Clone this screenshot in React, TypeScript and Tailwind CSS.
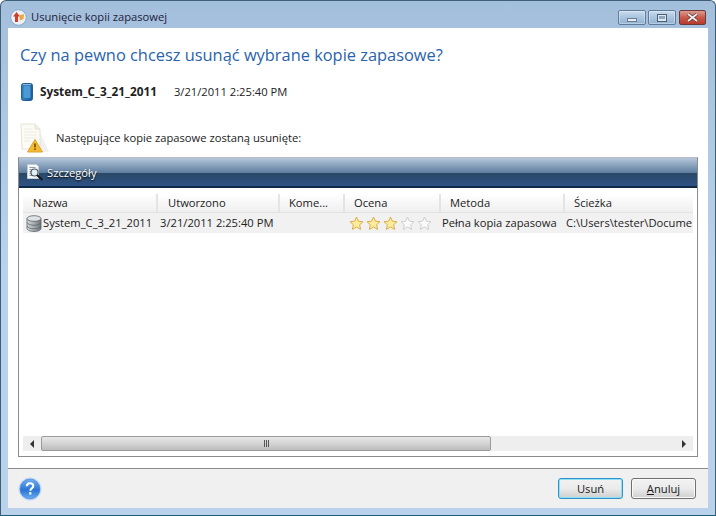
const columns = [
  { title: 'Nazwa', width: 'w-[135px]', pad: 'pl-[10px]' },
  { title: 'Utworzono', width: 'w-[122px]', pad: 'pl-[10px]' },
  { title: 'Kome...', width: 'w-[65px]', pad: 'pl-[9px]' },
  { title: 'Ocena', width: 'w-[96px]', pad: 'pl-[9px]' },
  { title: 'Metoda', width: 'w-[124px]', pad: 'pl-[9px]' },
  { title: 'Ścieżka', width: 'w-[128px]', pad: 'pl-[9px]' },
];

function AppIcon() {
  return (
    <svg width="17" height="17" viewBox="0 0 17 17">
      <circle cx="8.500" cy="8.500" r="7.800" fill="#eef2f6" stroke="#86a6c8" strokeWidth="1" />
      <path d="M6.500 3 10 7.500H8V13H5V7.500H3z" fill="#cf3f30" />
      <path d="M9 6.500 14 5 13.500 10 10 11.500z" fill="#efa63c" />
    </svg>
  );
}

function DeviceIcon() {
  return (
    <svg width="12" height="18" viewBox="0 0 12 18">
      <defs>
        <linearGradient id="dev" x1="0" x2="1" y1="0" y2="0">
          <stop offset="0" stopColor="#2f7fc0" />
          <stop offset="1" stopColor="#1b5f9c" />
        </linearGradient>
      </defs>
      <rect x="0.500" y="0.500" width="11" height="17" rx="2" fill="url(#dev)" stroke="#25608f" />
      <rect x="2.500" y="3" width="7" height="12" rx="1" fill="#4c9ad2" />
      <rect x="2" y="1.200" width="8" height="1" fill="#9ccbe9" />
    </svg>
  );
}

function WarningDocIcon() {
  return (
    <svg width="31" height="34" viewBox="0 0 31 34">
      <path d="M14 31 21 11 30 31z" fill="#e6e6e6" opacity="0.6" />
      <path d="M2 3h14l5 5v20H3z" fill="#fcfbf6" stroke="#e6e3d6" />
      <path d="M16 3v5h5" fill="#f0eee2" stroke="#e6e3d6" />
      <path d="M5 8h8M5 11h13M5 14h13M5 17h13M5 20h6" stroke="#eeece0" />
      <path d="M16 18.500 23.500 31H8.500z" fill="#f7b92c" stroke="#d9a435" />
      <path d="M16 22.500v4M16 27.500v1.500" stroke="#5a3c08" strokeWidth="1.400" />
    </svg>
  );
}

function DetailsIcon() {
  return (
    <svg width="18" height="18" viewBox="0 0 18 18">
      <path d="M1.500 0.500h9l2 2v12h-11z" fill="#f6f8fa" stroke="#c3ccd5" />
      <path d="M3.500 3.500h6M3.500 5.500h2M3.500 7.500h2M3.500 9.500h2M3.500 11.500h4" stroke="#8d99a5" />
      <circle cx="8.500" cy="8.500" r="3.500" fill="#e3eef5" stroke="#4d5a64" strokeWidth="1.200" />
      <path d="M11 11 16.500 16" stroke="#141c24" strokeWidth="2.200" />
    </svg>
  );
}

function DiskIcon() {
  return (
    <svg width="16" height="17" viewBox="0 0 16 17">
      <defs>
        <linearGradient id="disk" x1="0" x2="1" y1="0" y2="0">
          <stop offset="0" stopColor="#d6dadd" />
          <stop offset="0.500" stopColor="#a6acb1" />
          <stop offset="1" stopColor="#6d7378" />
        </linearGradient>
      </defs>
      <path d="M1 3.500v10C1 15.200 4.400 16.500 8 16.500s7-1.300 7-3v-10z" fill="url(#disk)" stroke="#5d6468" strokeWidth="0.800" />
      <ellipse cx="8" cy="3.500" rx="7" ry="2.800" fill="#dfe3e6" stroke="#5d6468" strokeWidth="0.800" />
      <path d="M1 7.500c1 1.800 3.800 2.800 7 2.800s6-1 7-2.800M1 11c1 1.800 3.800 2.800 7 2.800s6-1 7-2.800" fill="none" stroke="#5d6468" strokeWidth="0.800" />
    </svg>
  );
}

function Star({ on }: { on: boolean }) {
  return (
    <svg width="15" height="15" viewBox="0 0 15 15" className="shrink-0">
      <path
        d="M7.500 1 9.400 5.200 14 5.700 10.600 8.800 11.600 13.400 7.500 11 3.400 13.400 4.400 8.800 1 5.700 5.600 5.200z"
        fill={on ? '#fdeb9c' : '#fbfbfb'}
        stroke={on ? '#d9ae4a' : '#cdcdcd'}
        strokeWidth="1"
        strokeLinejoin="round"
      />
    </svg>
  );
}

function HelpIcon() {
  return (
    <svg width="24" height="24" viewBox="0 0 24 24">
      <defs>
        <linearGradient id="help" x1="0" x2="0" y1="0" y2="1">
          <stop offset="0" stopColor="#6fb0f0" />
          <stop offset="0.550" stopColor="#2c74d4" />
          <stop offset="1" stopColor="#68aef0" />
        </linearGradient>
      </defs>
      <circle cx="12" cy="12" r="11.500" fill="#c5dcf7" />
      <circle cx="12" cy="12" r="10" fill="url(#help)" stroke="#3b7fd0" strokeWidth="0.600" />
      <path d="M8.800 9.300c0-2 1.500-3 3.300-3s3.200 1 3.200 2.700c0 2.400-3 2.400-3 4.700" fill="none" stroke="#fff" strokeWidth="2" />
      <rect x="11.200" y="15.200" width="2.200" height="2.300" fill="#fff" />
    </svg>
  );
}

function WindowButton({ kind }: { kind: 'min' | 'max' | 'close' }) {
  if (kind === 'close') {
    return (
      <div className="w-[27px] h-[15px] ml-[1px] rounded-[2px] border border-[#6b3a3a] bg-gradient-to-b from-[#dd9a8e] via-[#c9594a] to-[#b8392c] flex items-center justify-center">
        <svg width="13" height="9" viewBox="0 0 13 9">
          <path d="M2 1l9 7M11 1 2 8" stroke="#4f3a3a" strokeWidth="3.200" />
          <path d="M2 1l9 7M11 1 2 8" stroke="#f2ecec" strokeWidth="1.800" />
        </svg>
      </div>
    );
  }
  return (
    <div className="w-[28px] h-[15px] rounded-[2px] border border-[#5f7b98] bg-gradient-to-b from-[#c9dcee] via-[#a9c4df] to-[#92b2d2] flex items-center justify-center shadow-[inset_0_0_0_1px_rgba(255,255,255,0.35)]">
      {kind === 'min' ? (
        <div className="w-[10px] h-[4px] mt-[5px] bg-[#e8eef4] border border-[#6b7f94]" />
      ) : (
        <div className="w-[10px] h-[8px] border border-[#4a5f76] bg-[#dfe8f1] flex items-center justify-center">
          <div className="w-[6px] h-[3px] bg-[#8fa6bd]" />
        </div>
      )}
    </div>
  );
}

function Button({ children, primary }: { children: React.ReactNode; primary?: boolean }) {
  return (
    <button
      className={`w-[65px] h-[21px] rounded-[3px] border bg-gradient-to-b from-[#f2f2f2] via-[#ebebeb] to-[#cfcfcf] text-[11.2px] text-[#1a1a1a] leading-none ${
        primary ? 'border-[#2f93c9] shadow-[inset_0_0_0_1px_#8fe0f5]' : 'border-[#707070] shadow-[inset_0_0_0_1px_#fafafa]'
      }`}
    >
      {children}
    </button>
  );
}

export default function App() {
  return (
    <div className="w-[716px] h-[516px] flex flex-col overflow-hidden rounded-t-[6px] border border-[#3f5f74] border-b-[#17607a] bg-gradient-to-b from-[#a4bfdc] via-[#b9d1ea] to-[#b9d1ea] font-['Open_Sans','Noto_Sans',sans-serif] text-[11.2px] text-[#222]">
      {/* Заголовок окна */}
      <div className="h-[27px] shrink-0 flex items-center pl-[9px] pr-[9px] pt-[6px]">
        <AppIcon />
        <span className="ml-[4px] text-[#1c1c3c]">Usunięcie kopii zapasowej</span>
        <div className="ml-auto flex gap-[2px] self-start mt-[3px]">
          <WindowButton kind="min" />
          <WindowButton kind="max" />
          <WindowButton kind="close" />
        </div>
      </div>

      <div className="flex-1 mx-[7px] mb-[7px] flex flex-col bg-white min-h-0">
        {/* Контент */}
        <div className="flex-1 flex flex-col px-[10px] min-h-0">
          <h1 className="mt-[15px] ml-[2px] text-[16.4px] leading-[24px] text-[#2a63ad]">
            Czy na pewno chcesz usunąć wybrane kopie zapasowe?
          </h1>
          <div className="mt-[15px] h-[20px] flex items-center pl-[3px]">
            <DeviceIcon />
            <span className="ml-[7px] text-[11.8px] font-bold">System_C_3_21_2011</span>
            <span className="ml-[17px]">3/21/2011 2:25:40 PM</span>
          </div>
          <div className="mt-[19px] h-[34px] flex items-center pl-[1px]">
            <WarningDocIcon />
            <span className="ml-[6px]">Następujące kopie zapasowe zostaną usunięte:</span>
          </div>

          {/* Панель */}
          <div className="mt-[2px] h-[300px] flex flex-col border border-[#8c8c8c] border-t-[#b9bcc2]">
            <div className="h-[30px] shrink-0 flex flex-col relative">
              <div className="h-[15px] bg-gradient-to-b from-[#b5c7dc] to-[#5d7d9e]" />
              <div className="flex-1 bg-gradient-to-b from-[#2a4866] to-[#2d5286] border-b-2 border-[#0f2a44]" />
              <div className="absolute inset-0 flex items-center pl-[7px] text-white">
                <DetailsIcon />
                <span className="ml-[3px] mt-[1px] [text-shadow:0_1px_2px_#000]">Szczegóły</span>
              </div>
            </div>

            <div className="flex-1 flex flex-col px-[4px] pt-[6px] pb-[5px] min-h-0">
              <div className="flex h-[19px] shrink-0 bg-gradient-to-b from-[#ffffff] to-[#efefef] border-b border-[#e3e3e3]">
                {columns.map((c) => (
                  <div key={c.title} className={`${c.width} ${c.pad} flex items-center border-r-2 border-[#e4e4e4] last:border-r-0`}>
                    {c.title}
                  </div>
                ))}
              </div>
              <div className="flex h-[20px] shrink-0 items-center bg-[#f1f1f1] whitespace-nowrap">
                <div className="w-[135px] flex items-center pl-[3px]">
                  <DiskIcon />
                  <span className="ml-[1px]">System_C_3_21_2011</span>
                </div>
                <div className="w-[122px] pl-[2px]">3/21/2011 2:25:40 PM</div>
                <div className="w-[65px]" />
                <div className="w-[96px] flex gap-[2px] pl-[4px]">
                  <Star on />
                  <Star on />
                  <Star on />
                  <Star on={false} />
                  <Star on={false} />
                </div>
                <div className="w-[124px] pl-[1px]">Pełna kopia zapasowa</div>
                <div className="w-[128px] pl-[1px]">C:\Users\tester\Docume</div>
              </div>

              <div className="flex-1" />

              {/* Скроллбар */}
              <div className="h-[15px] shrink-0 flex items-center bg-[#eeeeee]">
                <div className="w-[18px] flex justify-center">
                  <div className="w-0 h-0 border-y-[4px] border-y-transparent border-r-[4px] border-r-[#333]" />
                </div>
                <div className="w-[450px] h-[15px] rounded-[2px] border border-[#9a9a9a] bg-gradient-to-b from-[#e8e8e8] via-[#d4d4d4] to-[#bcbcbc] flex items-center justify-center">
                  <div className="flex gap-[1px]">
                    <div className="w-[1px] h-[7px] bg-[#555]" />
                    <div className="w-[1px] h-[7px] bg-[#555]" />
                    <div className="w-[1px] h-[7px] bg-[#555]" />
                  </div>
                </div>
                <div className="flex-1" />
                <div className="w-[18px] flex justify-center">
                  <div className="w-0 h-0 border-y-[4px] border-y-transparent border-l-[4px] border-l-[#333]" />
                </div>
              </div>
            </div>
          </div>
        </div>

        {/* Подвал */}
        <div className="h-[40px] shrink-0 border-t border-[#8c8c8c] bg-[#f0f0f0] flex items-center pl-[10px] pr-[12px] mt-[11px]">
          <HelpIcon />
          <div className="ml-auto flex gap-[8px]">
            <Button primary>Usuń</Button>
            <Button>
              <span className="underline">A</span>nuluj
            </Button>
          </div>
        </div>
      </div>
    </div>
  );
}
